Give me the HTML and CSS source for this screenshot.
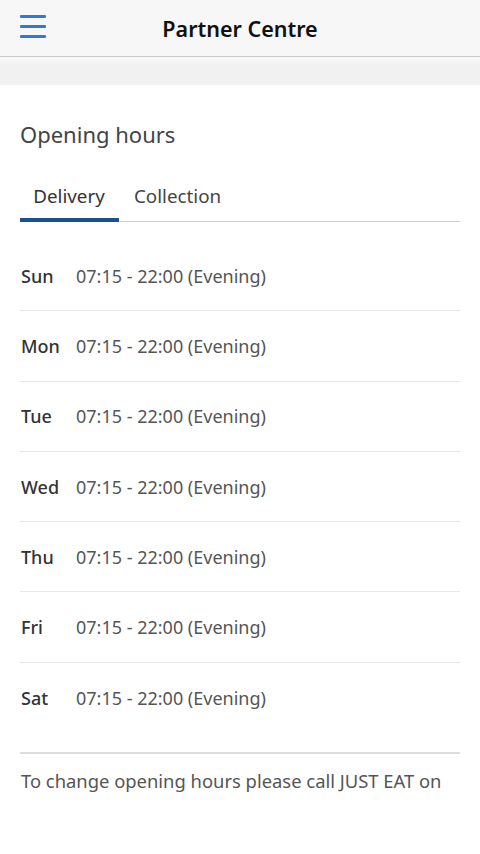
FILE: index.html
```html
<!DOCTYPE html>
<html lang="en">
<head>
    <meta charset="UTF-8">
    <meta name="viewport" content="width=device-width, initial-scale=1.0">
    <title>Partner Centre</title>
    <link rel="stylesheet" href="styles.css">
</head>
<body>
    <header class="topbar">
        <button class="menu-btn" aria-label="Menu">
            <svg width="26" height="24" viewBox="0 0 26 24">
                <rect x="0" y="1" width="26" height="3" rx="1" fill="#2f7ad6"/>
                <rect x="0" y="11" width="26" height="3" rx="1" fill="#2f7ad6"/>
                <rect x="0" y="21" width="26" height="3" rx="1" fill="#2f7ad6"/>
            </svg>
        </button>
        <h1 class="title">Partner Centre</h1>
        <span></span>
    </header>
    <div class="band"></div>

    <main class="content">
        <h2 class="heading">Opening hours</h2>

        <div class="tabs">
            <button class="tab active">Delivery</button>
            <button class="tab">Collection</button>
        </div>

        <ul class="hours">
            <li class="row"><span class="day">Sun</span><span class="time">07:15 - 22:00 (Evening)</span></li>
            <li class="row"><span class="day">Mon</span><span class="time">07:15 - 22:00 (Evening)</span></li>
            <li class="row"><span class="day">Tue</span><span class="time">07:15 - 22:00 (Evening)</span></li>
            <li class="row"><span class="day">Wed</span><span class="time">07:15 - 22:00 (Evening)</span></li>
            <li class="row"><span class="day">Thu</span><span class="time">07:15 - 22:00 (Evening)</span></li>
            <li class="row"><span class="day">Fri</span><span class="time">07:15 - 22:00 (Evening)</span></li>
            <li class="row"><span class="day">Sat</span><span class="time">07:15 - 22:00 (Evening)</span></li>
        </ul>

        <p class="note">To change opening hours please call JUST EAT on</p>
    </main>
</body>
</html>
```

FILE: styles.css
```css
body {
    margin: 0;
    font-family: "Noto Sans", "Open Sans", sans-serif;
    background: #fff;
    color: #333;
}
.topbar {
    height: 56px;
    display: grid;
    grid-template-columns: 1fr auto 1fr;
    align-items: center;
    background: #f7f7f7;
    border-bottom: 1px solid #c9c9c9;
    padding: 0 20px;
}
.menu-btn {
    background: none;
    border: none;
    padding: 0;
    width: 26px;
    height: 24px;
    margin-top: -4px;
    cursor: pointer;
}
.menu-btn svg {
    display: block;
}
.title {
    margin: 0;
    font-size: 21.5px;
    font-weight: 600;
    color: #111;
}
.band {
    height: 28px;
    background: linear-gradient(#fafafa 0, #f1f1f1 8px, #f1f1f1 100%);
}
.content {
    padding: 0 20px;
}
.heading {
    margin: 0;
    padding-top: 33px;
    font-size: 22px;
    font-weight: 400;
    color: #444;
    line-height: 32px;
}
.tabs {
    display: flex;
    margin-top: 33px;
    border-bottom: 1px solid #cfcfcf;
}
.tab {
    font-family: inherit;
    font-size: 18.8px;
    color: #444;
    background: none;
    border: none;
    padding: 0 14px 10px 13px;
    height: 39px;
    border-bottom: 4px solid transparent;
    margin-bottom: -1px;
    cursor: pointer;
}
.tab.active {
    color: #333;
    border-bottom-color: #1d4f93;
    width: 99px;
    margin-right: 2px;
}
.hours {
    list-style: none;
    margin: 0;
    padding: 19px 0 19px;
    border-bottom: 2px solid #dcdcdc;
}
.row {
    display: flex;
    align-items: center;
    height: 70.3px;
    box-sizing: border-box;
    border-bottom: 1px solid #e8e8e8;
    font-size: 18px;
}
.row:last-child {
    border-bottom: none;
}
.day {
    width: 55px;
    padding-left: 1px;
    font-weight: 500;
    color: #333;
}
.time {
    color: #555;
}
.note {
    margin: 14px 0 0;
    font-size: 18.4px;
    color: #555;
    padding-left: 1px;
}
```
